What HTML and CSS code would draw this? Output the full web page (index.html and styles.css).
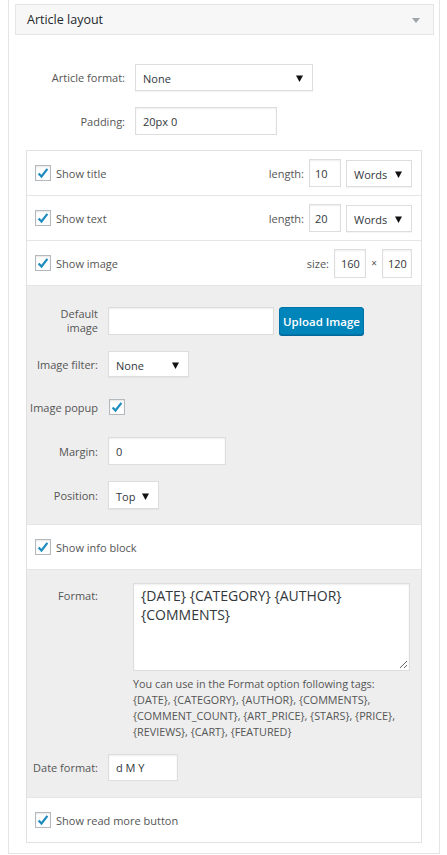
FILE: index.html
```html
<!DOCTYPE html>
<html>
<head>
<meta charset="utf-8">
<link rel="stylesheet" href="styles.css">
</head>
<body>
<div class="panel">
  <div class="panel-head">
    <span class="panel-title">Article layout</span>
    <svg class="head-arrow" width="8" height="5" viewBox="0 0 8 5"><path d="M0 0h8L4 5z" fill="#a0a5aa"/></svg>
  </div>

  <div class="top-form">
    <div class="frow">
      <label class="flabel">Article format:</label>
      <div class="select sel-format"><span>None</span><svg width="7" height="7" viewBox="0 0 7 7"><path d="M0 0.5h7L3.5 7z" fill="#111"/></svg></div>
    </div>
    <div class="frow">
      <label class="flabel">Padding:</label>
      <div class="input inp-padding">20px 0</div>
    </div>
  </div>

  <div class="box">
    <div class="crow">
      <span class="check"><svg width="14" height="14" viewBox="0 0 14 14"><path d="M2.6 7.4l2.9 3.1L11.4 2.8" fill="none" stroke="#1e8cbe" stroke-width="2.2"/></svg></span>
      <span class="clabel">Show title</span>
      <span class="rlabel">length:</span>
      <div class="input inp-small">10</div>
      <div class="select sel-words"><span>Words</span><svg width="7" height="7" viewBox="0 0 7 7"><path d="M0 0.5h7L3.5 7z" fill="#111"/></svg></div>
    </div>
    <div class="crow">
      <span class="check"><svg width="14" height="14" viewBox="0 0 14 14"><path d="M2.6 7.4l2.9 3.1L11.4 2.8" fill="none" stroke="#1e8cbe" stroke-width="2.2"/></svg></span>
      <span class="clabel">Show text</span>
      <span class="rlabel">length:</span>
      <div class="input inp-small">20</div>
      <div class="select sel-words"><span>Words</span><svg width="7" height="7" viewBox="0 0 7 7"><path d="M0 0.5h7L3.5 7z" fill="#111"/></svg></div>
    </div>
    <div class="crow">
      <span class="check"><svg width="14" height="14" viewBox="0 0 14 14"><path d="M2.6 7.4l2.9 3.1L11.4 2.8" fill="none" stroke="#1e8cbe" stroke-width="2.2"/></svg></span>
      <span class="clabel">Show image</span>
      <span class="rlabel">size:</span>
      <div class="input inp-size">160</div>
      <span class="times">×</span>
      <div class="input inp-size inp-size2">120</div>
    </div>

    <div class="gray gray-image">
      <div class="grow grow-top">
        <label class="glabel glabel-two">Default<br>image</label>
        <div class="input inp-default"></div>
        <button class="btn-upload" type="button">Upload Image</button>
      </div>
      <div class="grow">
        <label class="glabel">Image filter:</label>
        <div class="select sel-filter"><span>None</span><svg width="7" height="7" viewBox="0 0 7 7"><path d="M0 0.5h7L3.5 7z" fill="#111"/></svg></div>
      </div>
      <div class="grow grow-popup">
        <label class="glabel">Image popup</label>
        <span class="check"><svg width="14" height="14" viewBox="0 0 14 14"><path d="M2.6 7.4l2.9 3.1L11.4 2.8" fill="none" stroke="#1e8cbe" stroke-width="2.2"/></svg></span>
      </div>
      <div class="grow">
        <label class="glabel">Margin:</label>
        <div class="input inp-margin">0</div>
      </div>
      <div class="grow">
        <label class="glabel">Position:</label>
        <div class="select sel-pos"><span>Top</span><svg width="7" height="7" viewBox="0 0 7 7"><path d="M0 0.5h7L3.5 7z" fill="#111"/></svg></div>
      </div>
    </div>

    <div class="crow">
      <span class="check"><svg width="14" height="14" viewBox="0 0 14 14"><path d="M2.6 7.4l2.9 3.1L11.4 2.8" fill="none" stroke="#1e8cbe" stroke-width="2.2"/></svg></span>
      <span class="clabel">Show info block</span>
    </div>

    <div class="gray gray-info">
      <div class="grow grow-format">
        <label class="glabel glabel-format">Format:</label>
        <div class="format-field">
          <div class="textarea">{DATE} {CATEGORY} {AUTHOR}<br>{COMMENTS}<svg class="grip" width="9" height="9" viewBox="0 0 9 9"><path d="M8 1L1 8M8 5L5 8" stroke="#666" stroke-width="1"/></svg></div>
          <p class="help">You can use in the Format option following tags: {DATE}, {CATEGORY}, {AUTHOR}, {COMMENTS}, {COMMENT_COUNT}, {ART_PRICE}, {STARS}, {PRICE}, {REVIEWS}, {CART}, {FEATURED}</p>
        </div>
      </div>
      <div class="grow">
        <label class="glabel">Date format:</label>
        <div class="input inp-date">d M Y</div>
      </div>
    </div>

    <div class="crow">
      <span class="check"><svg width="14" height="14" viewBox="0 0 14 14"><path d="M2.6 7.4l2.9 3.1L11.4 2.8" fill="none" stroke="#1e8cbe" stroke-width="2.2"/></svg></span>
      <span class="clabel">Show read more button</span>
    </div>
  </div>
</div>
</body>
</html>
```

FILE: styles.css
```css
* { box-sizing: border-box; }
html, body { margin: 0; padding: 0; background: #fff; }
body {
  font-family: "Open Sans", "Noto Sans", sans-serif;
  font-size: 11px;
  color: #555;
}
.panel {
  margin: 0 8px;
  width: 432px;
  height: 854px;
  border-left: 1px solid #e5e5e5;
  border-right: 1px solid #e5e5e5;
  border-bottom: 1px solid #e5e5e5;
  padding: 4px 5px 0 6px;
}
.panel-head {
  height: 31px;
  border: 1px solid #e5e5e5;
  background: #f7f7f7;
  display: flex;
  align-items: center;
  justify-content: space-between;
  padding: 0 13px 0 11px;
}
.panel-title { font-size: 12.5px; color: #23282d; }
.head-arrow { margin-top: 1px; }

.top-form {
  padding: 29px 0 15px;
  display: flex;
  flex-direction: column;
  gap: 16px;
}
.frow { display: flex; align-items: center; gap: 10px; }
.flabel { width: 110px; text-align: right; }

.input {
  background: #fff;
  border: 1px solid #ddd;
  box-shadow: inset 0 1px 2px rgba(0,0,0,.07);
  color: #32373c;
  display: flex;
  align-items: center;
  padding: 0 7px;
  height: 28px;
}
.select {
  background: #fff;
  border: 1px solid #ddd;
  box-shadow: 0 1px 1px rgba(0,0,0,.04);
  color: #32373c;
  display: flex;
  align-items: center;
  justify-content: space-between;
  padding: 2px 9px 0 7px;
  height: 27px;
}
.sel-format { width: 178px; height: 27px; }
.inp-padding { width: 142px; }

.box {
  margin: 0 12px 0 11px;
  border: 1px solid #e1e1e1;
}
.crow {
  height: 45px;
  display: flex;
  align-items: center;
  padding: 0 9px 0 8px;
  border-top: 1px solid #e5e5e5;
  background: #fff;
}
.box > .crow:first-child { border-top: 0; height: 44px; }
.check {
  width: 16px; height: 16px;
  border: 1px solid #b4b9be;
  background: #fff;
  box-shadow: inset 0 1px 2px rgba(0,0,0,.1);
  display: inline-flex;
  align-items: center;
  justify-content: center;
  flex: none;
}
.clabel { margin-left: 5px; flex: 1; }
.rlabel { margin-right: 5px; }
.inp-small { width: 32px; padding: 0 5px; }
.sel-words { width: 66px; margin-left: 5px; }
.inp-size { width: 32px; padding: 0 6px; height: 29px; }
.times { width: 16px; text-align: center; font-size: 10px; }
.inp-size2 { width: 30px; padding: 0 5px; }

.gray {
  background: #eee;
  border-top: 1px solid #e5e5e5;
  display: flex;
  flex-direction: column;
}
.gray-image { padding: 21px 0 15px; gap: 16px; }
.gray-image .grow-popup { margin-top: 6px; margin-bottom: 6px; }
.gray-info { padding: 13px 0 16px; gap: 14px; }
.grow { display: flex; align-items: center; gap: 10px; }
.grow-top { align-items: flex-start; }
.glabel {
  width: 71px;
  flex: none;
  display: flex;
  justify-content: flex-end;
  white-space: nowrap;
}
.glabel-two { display: block; text-align: right; line-height: 14px; }
.grow-popup .check { margin-left: 1px; }
.inp-default { width: 166px; }
.btn-upload {
  margin-left: -5px;
  height: 28px;
  width: 85px;
  padding: 0;
  background: #0085ba;
  border: 1px solid #0073aa;
  border-radius: 3px;
  box-shadow: 0 1px 0 #006799;
  color: #fff;
  font-family: "Open Sans", sans-serif;
  font-size: 11.5px;
  font-weight: 600;
}
.sel-filter { width: 81px; height: 26px; }
.inp-margin { width: 118px; }
.sel-pos { width: 51px; height: 28px; }

.grow-format { align-items: flex-start; gap: 0; }
.glabel-format { padding-top: 5px; }
.format-field { margin-left: 35px; width: 277px; }
.textarea {
  position: relative;
  height: 88px;
  background: #fff;
  border: 1px solid #ddd;
  box-shadow: inset 0 1px 2px rgba(0,0,0,.07);
  color: #32373c;
  font-size: 14px;
  line-height: 19px;
  padding: 2px 7px;
}
.grip { position: absolute; right: 1px; bottom: 1px; }
.help { margin: 5px 0 0; line-height: 16px; font-size: 10.8px; }
.inp-date { width: 70px; height: 27px; }
```
